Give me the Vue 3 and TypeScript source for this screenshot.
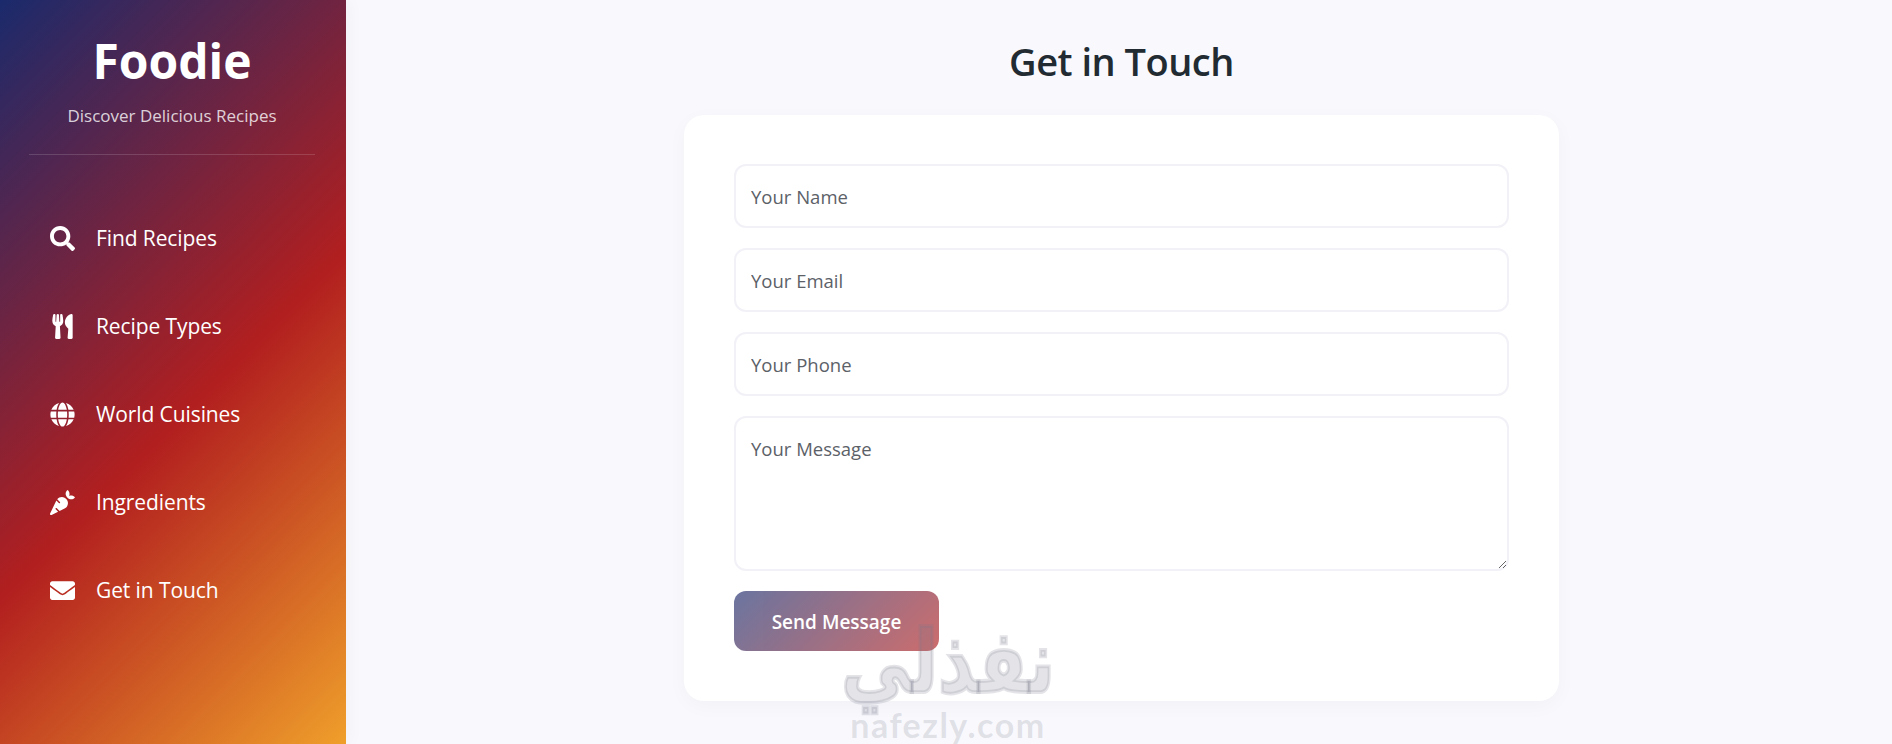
<script setup lang="ts">
interface NavItem { label: string; icon: string; vb: string }
const items: NavItem[] = [
  { label: 'Find Recipes', vb: '0 0 512 512', icon: 'M505 442.7L405.3 343c-4.5-4.5-10.6-7-17-7H372c27.6-35.3 44-79.7 44-128C416 93.1 322.9 0 208 0S0 93.1 0 208s93.1 208 208 208c48.3 0 92.7-16.4 128-44v16.3c0 6.4 2.5 12.5 7 17l99.7 99.7c9.4 9.4 24.6 9.4 33.9 0l28.3-28.3c9.4-9.4 9.4-24.6.1-34zM208 336c-70.7 0-128-57.2-128-128 0-70.7 57.2-128 128-128 70.7 0 128 57.2 128 128 0 70.7-57.2 128-128 128z' },
  { label: 'Recipe Types', vb: '0 0 416 512', icon: 'M207.9 15.2c.8 4.7 16.1 94.5 16.1 128.8 0 52.3-27.8 89.6-68.9 104.6L168 486.7c.7 13.7-10.2 25.3-24 25.3H80c-13.7 0-24.7-11.5-24-25.3l12.9-238.1C27.7 233.6 0 196.2 0 144 0 109.6 15.3 19.9 16.1 15.2 19.3-5.1 61.4-5.4 64 16.3v141.2c1.3 3.4 15.1 3.2 16 0 1.4-25.3 7.9-139.2 8-141.8 3.3-20.8 44.7-20.8 47.9 0 .2 2.7 6.6 116.5 8 141.8.9 3.2 14.8 3.4 16 0V16.3c2.6-21.6 44.8-21.4 48-1.1zm119.2 285.7l-15 185.1c-1.2 14 9.9 26 23.9 26h56c13.3 0 24-10.7 24-24V24c0-13.2-10.7-24-24-24-82.5 0-221.4 178.5-64.9 300.9z' },
  { label: 'World Cuisines', vb: '0 0 496 512', icon: 'M336.5 160C322 70.7 287.8 8 248 8s-74 62.7-88.5 152h177zM152 256c0 22.2 1.2 43.5 3.3 64h185.3c2.1-20.5 3.3-41.8 3.3-64s-1.2-43.5-3.3-64H155.3c-2.1 20.5-3.3 41.8-3.3 64zm324.7-96c-28.6-67.9-86.5-120.4-158-141.6 24.4 33.8 41.2 84.7 50 141.6h108zM177.2 18.4C105.8 39.6 47.8 92.1 19.3 160h108c8.7-56.9 25.5-107.8 49.9-141.6zM487.4 192H372.7c2.1 21 3.3 42.5 3.3 64s-1.2 43-3.3 64h114.6c5.5-20.5 8.6-41.8 8.6-64s-3.1-43.5-8.5-64zM120 256c0-21.5 1.2-43 3.3-64H8.6C3.2 212.5 0 233.8 0 256s3.2 43.5 8.6 64h114.6c-2-21-3.2-42.5-3.2-64zm39.5 96c14.5 89.3 48.7 152 88.5 152s74-62.7 88.5-152h-177zm159.3 141.6c71.4-21.2 129.4-73.7 158-141.6h-108c-8.8 56.9-25.6 107.8-50 141.6zM19.3 352c28.6 67.9 86.5 120.4 158 141.6-24.4-33.8-41.2-84.7-50-141.6h-108z' },
  { label: 'Ingredients', vb: '0 0 512 512', icon: 'M298.2 156.6c-52.7-25.7-114.5-10.5-150.2 32.8l55.2 55.2c6.3 6.2 6.3 16.4 0 22.6-3.1 3.1-7.2 4.7-11.3 4.7s-8.2-1.6-11.3-4.7L130.4 217 2.3 479.7c-2.9 6-3.1 13.3 0 19.7 5.4 11.1 18.9 15.7 30 10.3l133.6-65.2-49.2-49.2c-6.2-6.2-6.2-16.4 0-22.6 6.3-6.2 16.4-6.2 22.6 0l57 57 102-49.8c24-11.7 44.5-31.3 57.1-57.1 30.1-61.7 4.5-136.1-57.2-166.2zm92.1-34.9C409.8 81 399.7 32.9 360 0c-50.3 41.7-52.5 107.5-7.9 151.9l8 8c44.4 44.6 110.3 42.4 151.9-7.9-32.9-39.7-81-49.8-121.7-30.3z' },
  { label: 'Get in Touch', vb: '0 0 512 512', icon: 'M502.3 190.8c3.9-3.1 9.7-.2 9.7 4.7V400c0 26.5-21.5 48-48 48H48c-26.5 0-48-21.5-48-48V195.6c0-5 5.7-7.8 9.7-4.7 22.4 17.4 52.1 39.5 154.1 113.6 21.1 15.4 56.7 47.8 92.2 47.6 35.7.3 72-32.8 92.3-47.6 102-74.1 131.6-96.3 154-113.7zM256 320c23.2.4 56.6-29.2 73.4-41.4 132.7-96.3 142.8-104.7 173.4-128.7 5.8-4.5 9.2-11.5 9.2-18.9v-19c0-26.5-21.5-48-48-48H48C21.5 64 0 85.5 0 112v19c0 7.4 3.4 14.3 9.2 18.9 30.6 23.9 40.7 32.4 173.4 128.7 16.8 12.2 50.2 41.8 73.4 41.4z' },
]
</script>

<template>
  <div class="page">
    <aside class="sidebar">
      <header class="brand">
        <h1>Foodie</h1>
        <p>Discover Delicious Recipes</p>
      </header>
      <nav class="nav">
        <a v-for="item in items" :key="item.label" class="nav-item" href="#">
          <span class="nav-icon">
            <svg :viewBox="item.vb" fill="currentColor" aria-hidden="true"><path :d="item.icon" /></svg>
          </span>
          <span>{{ item.label }}</span>
        </a>
      </nav>
    </aside>
    <main class="main">
      <h2>Get in Touch</h2>
      <form class="card" @submit.prevent>
        <input class="field" type="text" placeholder="Your Name" />
        <input class="field" type="email" placeholder="Your Email" />
        <input class="field" type="tel" placeholder="Your Phone" />
        <textarea class="field area" placeholder="Your Message"></textarea>
        <button class="send" type="submit">Send Message</button>
      </form>
    </main>
    <div class="watermark" aria-hidden="true">
      <span class="wm-ar" lang="ar" dir="rtl">نفذلي</span>
      <span class="wm-en">nafezly.com</span>
    </div>
  </div>
</template>

<style>
html, body { margin: 0; background: #f8f8fd; }
</style>

<style scoped>
.page {
  position: relative;
  display: flex;
  height: 744px;
  overflow: hidden;
  background: #f8f8fd;
  font-family: "Open Sans", "Noto Sans", sans-serif;
}
.sidebar {
  width: 346px;
  flex: none;
  color: #fff;
  background-image: linear-gradient(135deg, #1a2a6c, #b21f1f, #fdbb2d);
  background-size: 346px 854px;
  background-repeat: no-repeat;
  box-shadow: 4px 0 15px rgba(0, 0, 0, 0.03);
}
.brand {
  margin: 0 31px 0 29px;
  height: 155px;
  box-sizing: border-box;
  padding-top: 31px;
  text-align: center;
  border-bottom: 1px solid rgba(255, 255, 255, 0.15);
}
.brand h1 {
  margin: 0;
  font-size: 48px;
  line-height: 60px;
  font-weight: 700;
}
.brand p {
  margin: 14px 0 0;
  font-size: 17px;
  line-height: 22px;
  color: rgba(255, 255, 255, 0.8);
}
.nav {
  display: flex;
  flex-direction: column;
  gap: 44px;
  padding: 61px 49px 0;
}
.nav-item {
  display: flex;
  align-items: center;
  gap: 21px;
  height: 44px;
  color: #fff;
  text-decoration: none;
  font-size: 21px;
  letter-spacing: -0.1px;
}
.nav-icon {
  width: 26px;
  height: 26px;
  display: flex;
  align-items: center;
  justify-content: center;
  flex: none;
}
.nav-icon svg { width: 25px; height: 25px; display: block; }
.main {
  flex: 1;
  min-width: 0;
  display: flex;
  flex-direction: column;
  align-items: center;
  padding: 0 0 0 5px;
}
.main h2 {
  margin: 31px 0 0;
  font-size: 38px;
  line-height: 60px;
  font-weight: 600;
  color: #212b31;
  letter-spacing: -0.5px;
}
.card {
  margin-top: 24px;
  width: 875px;
  box-sizing: border-box;
  padding: 49px 50px 50px;
  display: flex;
  flex-direction: column;
  gap: 20px;
  align-items: flex-start;
  background: #fff;
  border-radius: 20px;
  box-shadow: 0 5px 20px rgba(0, 0, 0, 0.03);
}
.field {
  width: 100%;
  height: 64px;
  box-sizing: border-box;
  padding: 1px 15px 0;
  border: 2px solid #f1f1f7;
  border-radius: 12px;
  background: #fff;
  font: inherit;
  font-size: 18.5px;
  color: #333;
  outline: none;
}
.field::placeholder { color: #5c6168; opacity: 1; }
.area {
  height: 155px;
  padding-top: 18px;
  resize: vertical;
  display: block;
}
.send {
  width: 205px;
  height: 60px;
  padding: 2px 0 0;
  border: 0;
  border-radius: 12px;
  font: inherit;
  font-size: 19px;
  font-weight: 600;
  color: #fff;
  background: linear-gradient(135deg, #1a2a6c, #b21f1f);
  opacity: 0.65;
}
.watermark {
  position: absolute;
  left: 840px;
  top: 620px;
  width: 216px;
  display: flex;
  flex-direction: column;
  align-items: center;
  color: rgba(120, 120, 140, 0.2);
  pointer-events: none;
}
.wm-ar {
  font-family: "DejaVu Sans", sans-serif;
  font-weight: 700;
  font-size: 70px;
  line-height: 84px;
  -webkit-text-stroke: 3px rgba(120, 120, 140, 0.2);
  transform: scaleY(1.25);
}
.wm-en {
  margin-top: 1px;
  font-family: "Lato", sans-serif;
  font-weight: 700;
  font-size: 34px;
  line-height: 40px;
  letter-spacing: 1.5px;
}
</style>
